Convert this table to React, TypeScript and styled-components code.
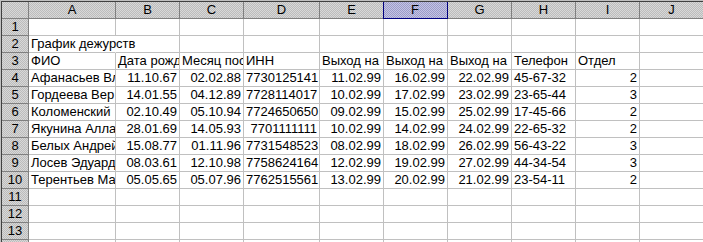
import styled, { createGlobalStyle } from "styled-components"

const GlobalStyle = createGlobalStyle`
html, body {
    margin: 0;
    padding: 0;
    background: #fff;
    overflow: hidden;
}
`

type Align = "left" | "right"
type CellData = { v: string, align?: Align, spill?: boolean }

const columns = [
    { name: "A", width: 87 },
    { name: "B", width: 64 },
    { name: "C", width: 64 },
    { name: "D", width: 76 },
    { name: "E", width: 64 },
    { name: "F", width: 64, selected: true },
    { name: "G", width: 64 },
    { name: "H", width: 64 },
    { name: "I", width: 64 },
    { name: "J", width: 64 },
]

// only the part of each name that fits in column A is shown
const people = [
    ["Афанасьев Вл", "11.10.67", "02.02.88", "7730125141", "11.02.99", "16.02.99", "22.02.99", "45-67-32", "2"],
    ["Гордеева Вер", "14.01.55", "04.12.89", "7728114017", "10.02.99", "17.02.99", "23.02.99", "23-65-44", "3"],
    ["Коломенский", "02.10.49", "05.10.94", "7724650650", "09.02.99", "15.02.99", "25.02.99", "17-45-66", "2"],
    ["Якунина Алла", "28.01.69", "14.05.93", "7701111111", "10.02.99", "14.02.99", "24.02.99", "22-65-32", "2"],
    ["Белых Андрей", "15.08.77", "01.11.96", "7731548523", "08.02.99", "18.02.99", "26.02.99", "56-43-22", "3"],
    ["Лосев Эдуард", "08.03.61", "12.10.98", "7758624164", "12.02.99", "19.02.99", "27.02.99", "44-34-54", "3"],
    ["Терентьев Ма", "05.05.65", "05.07.96", "7762515561", "13.02.99", "20.02.99", "21.02.99", "23-54-11", "2"],
]

// A, H are text; the rest are numbers / dates
const alignFor = (i: number): Align => (i === 0 || i === 7 ? "left" : "right")

const buildRows = (): CellData[][] => {
    const blank = (): CellData[] => columns.map(() => ({ v: "" }))
    const rows: CellData[][] = []
    rows.push(blank())
    const title = blank()
    title[0] = { v: "График дежурств", spill: true }
    rows.push(title)
    const heads = ["ФИО", "Дата рожд", "Месяц пос", "ИНН", "Выход на", "Выход на", "Выход на", "Телефон", "Отдел", ""]
    rows.push(heads.map((v) => ({ v, align: "left" as Align })))
    people.forEach((p) => {
        const r: CellData[] = p.map((v, i) => ({ v, align: alignFor(i) }))
        r.push({ v: "" })
        rows.push(r)
    })
    while (rows.length < 14) rows.push(blank())
    return rows
}

const App = () => {
    const rows = buildRows()
    return (
        <>
            <GlobalStyle />
            <Frame>
                <Sheet>
                    <Corner />
                    {columns.map((c) => (
                        <ColHead key={c.name} $selected={!!c.selected}>{c.name}</ColHead>
                    ))}
                    {rows.map((row, ri) => (
                        <Row key={ri}>
                            <RowHead>{ri + 1}</RowHead>
                            {row.map((cell, ci) => (
                                <Cell key={ci} $align={cell.align || "left"} $spill={!!cell.spill}>
                                    {cell.v}
                                </Cell>
                            ))}
                        </Row>
                    ))}
                </Sheet>
            </Frame>
        </>
    )
}

export default App

const Frame = styled.div`
width: 703px;
height: 242px;
overflow: hidden;
box-sizing: border-box;
border-top: 1px solid #c0c0c0;
border-left: 1px solid #c0c0c0;
`
const Sheet = styled.div`
display: grid;
grid-template-columns: 27px ${columns.map((c) => c.width + "px").join(" ")};
grid-auto-rows: 17px;
border-top: 1px solid #404040;
border-left: 1px solid #404040;
font-family: "Liberation Sans", Arial, sans-serif;
font-size: 13px;
color: #000;
background: #fff;
`
const Row = styled.div`
display: contents;
`
const headerBg = `repeating-conic-gradient(#bcbcbc 0% 25%, #d8d8d8 0% 50%) 0 0 / 2px 2px`

const Corner = styled.div`
background: ${headerBg};
border-right: 1px solid #808080;
border-bottom: 1px solid #808080;
`
const ColHead = styled.div<{ $selected: boolean }>`
display: flex;
align-items: center;
justify-content: center;
line-height: 16px;
background: ${props => props.$selected ? `repeating-conic-gradient(#9c9cc8 0% 25%, #c4c4e4 0% 50%) 0 0 / 2px 2px` : headerBg};
border-right: 1px solid ${props => props.$selected ? "#000080" : "#808080"};
border-bottom: 1px solid ${props => props.$selected ? "#000080" : "#808080"};
${props => props.$selected && "box-shadow: inset 1px 0 0 #000080; margin-left: -1px;"}
`
const RowHead = styled.div`
display: flex;
align-items: center;
justify-content: center;
line-height: 16px;
background: ${headerBg};
border-right: 1px solid #808080;
border-bottom: 1px solid #808080;
`
const Cell = styled.div<{ $align: Align, $spill: boolean }>`
box-sizing: border-box;
padding: 0 2px;
line-height: 16px;
white-space: nowrap;
text-align: ${props => props.$align};
overflow: ${props => props.$spill ? "visible" : "hidden"};
border-bottom: 1px solid #c0c0c0;
border-right: 1px solid ${props => props.$spill ? "transparent" : "#c0c0c0"};
position: ${props => props.$spill ? "relative" : "static"};
z-index: ${props => props.$spill ? 1 : "auto"};
`
